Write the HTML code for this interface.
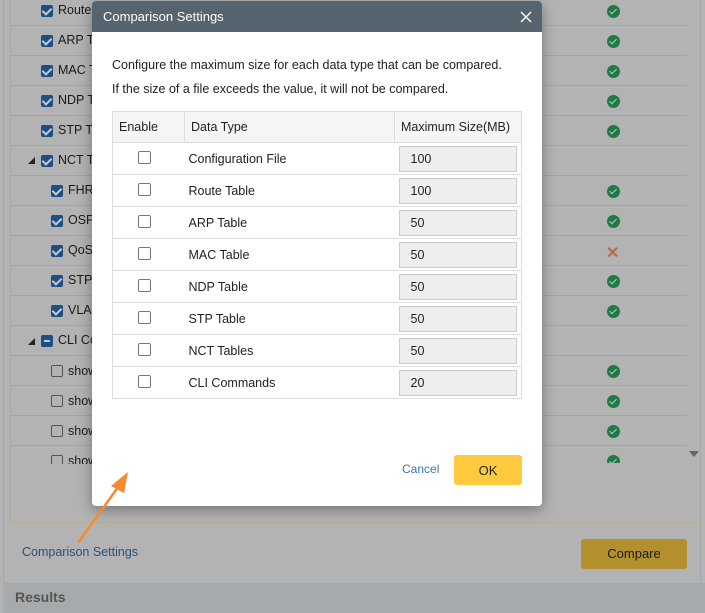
<!DOCTYPE html>
<html><head><style>
*{margin:0;padding:0;box-sizing:border-box}
body{width:705px;height:613px;overflow:hidden;background:#b3b3b3;font-family:"Liberation Sans",sans-serif;font-size:12px;color:#1a1a1a;position:relative}
.abs{position:absolute}
.row{position:absolute;left:10px;width:677px;height:30px;border-bottom:1px solid #a4a4a4}
.cb{position:absolute;width:12px;height:12px;border-radius:2px;background:#1c4f86}
.cb:after{content:"";position:absolute;left:3px;top:1px;width:4px;height:7px;border:solid #c8c8c8;border-width:0 2px 2px 0;transform:rotate(45deg)}
.ce{position:absolute;width:12px;height:12px;border-radius:2px;border:1px solid #555;background:#b3b3b3}
.lbl{position:absolute;font-size:12.5px;color:#1a1a1a}
.ok{position:absolute;left:607px;width:13px;height:13px;border-radius:50%;background:#1f7a45}
.ok:after{content:"";position:absolute;left:4px;top:2px;width:3px;height:6px;border:solid #b8c8bd;border-width:0 1.5px 1.5px 0;transform:rotate(45deg)}
.tri{position:absolute;width:0;height:0;border-left:7px solid transparent;border-bottom:7px solid #222}
#dlg{position:absolute;left:92px;top:1px;width:450px;height:505px;background:#fff;border-radius:4px;box-shadow:0 4px 14px rgba(0,0,0,.35);overflow:hidden}
#hd{height:31px;background:#56646f;color:#fff;font-size:13px;padding:8px 0 0 11px}
table{position:absolute;left:20px;top:110px;width:410px;border-collapse:collapse;font-size:12.5px;color:#222}
td,th{border:1px solid #ddd;height:32px;font-weight:normal;text-align:left}
th{background:#f5f5f5;height:31px;padding-left:6px}
td{border-left:none;border-right:none}
td:first-child{border-left:1px solid #ddd;padding-left:25px}td:last-child{border-right:1px solid #ddd}
.bx{display:block;width:13px;height:13px;border:1px solid #777;border-radius:2px;margin-top:-3px}
.inp{width:118px;height:26px;background:#eee;border:1px solid #ccc;padding:5px 0 0 11px;margin-left:4px}
</style></head><body>
<div class="abs" style="left:3px;top:0;width:1px;height:583px;background:#a8a8a8"></div>
<div class="abs" style="left:10px;top:0;width:1px;height:523px;background:#a8a8a8"></div>
<div class="abs" style="left:10px;top:522px;width:690px;height:1px;background:#b9ad8c"></div>
<div class="abs" style="left:700px;top:0;width:1px;height:583px;background:#a8a8a8"></div>
<div class="row" style="top:-4px"></div><div class="row" style="top:26px"></div><div class="row" style="top:56px"></div><div class="row" style="top:86px"></div><div class="row" style="top:116px"></div><div class="row" style="top:146px"></div><div class="row" style="top:176px"></div><div class="row" style="top:206px"></div><div class="row" style="top:236px"></div><div class="row" style="top:266px"></div><div class="row" style="top:296px"></div><div class="row" style="top:326px"></div><div class="row" style="top:356px"></div><div class="row" style="top:386px"></div><div class="row" style="top:416px"></div>
<div class="cb" style="left:41px;top:5px"></div><div class="lbl" style="left:58px;top:3px">Route</div>
<div class="cb" style="left:41px;top:35px"></div><div class="lbl" style="left:58px;top:33px">ARP Ta</div>
<div class="cb" style="left:41px;top:65px"></div><div class="lbl" style="left:58px;top:63px">MAC T</div>
<div class="cb" style="left:41px;top:95px"></div><div class="lbl" style="left:58px;top:93px">NDP T</div>
<div class="cb" style="left:41px;top:125px"></div><div class="lbl" style="left:58px;top:123px">STP Ta</div>
<div class="tri" style="left:28px;top:157px"></div>
<div class="cb" style="left:41px;top:155px"></div><div class="lbl" style="left:58px;top:153px">NCT Ta</div>
<div class="cb" style="left:51px;top:185px"></div><div class="lbl" style="left:68px;top:183px">FHRP</div>
<div class="cb" style="left:51px;top:215px"></div><div class="lbl" style="left:68px;top:213px">OSPF</div>
<div class="cb" style="left:51px;top:245px"></div><div class="lbl" style="left:68px;top:243px">QoS</div>
<div class="cb" style="left:51px;top:275px"></div><div class="lbl" style="left:68px;top:273px">STP</div>
<div class="cb" style="left:51px;top:305px"></div><div class="lbl" style="left:68px;top:303px">VLAN</div>
<div class="tri" style="left:28px;top:338px"></div>
<div class="abs" style="left:41px;top:335px;width:12px;height:12px;border-radius:2px;background:#1c4f86"><div style="margin:5px 3px;height:2px;background:#c8c8c8"></div></div><div class="lbl" style="left:58px;top:333px">CLI Co</div>
<div class="ce" style="left:51px;top:365px"></div><div class="lbl" style="left:68px;top:364px">show</div>
<div class="ce" style="left:51px;top:395px"></div><div class="lbl" style="left:68px;top:394px">show</div>
<div class="ce" style="left:51px;top:425px"></div><div class="lbl" style="left:68px;top:424px">show</div>
<div class="abs" style="left:0;top:455px;width:120px;height:9px;overflow:hidden"><div class="ce" style="left:51px;top:0"></div><div class="lbl" style="left:68px;top:-1px">show</div></div>
<div class="ok" style="top:5px"></div><div class="ok" style="top:35px"></div><div class="ok" style="top:65px"></div><div class="ok" style="top:95px"></div><div class="ok" style="top:125px"></div><div class="ok" style="top:185px"></div><div class="ok" style="top:215px"></div>
<div class="abs" style="left:606px;top:243px;color:#c0664a;font-size:16px;font-weight:bold">✕</div>
<div class="ok" style="top:275px"></div><div class="ok" style="top:305px"></div><div class="ok" style="top:365px"></div><div class="ok" style="top:395px"></div><div class="ok" style="top:425px"></div>
<div class="abs" style="left:0;top:455px;width:705px;height:8px;overflow:hidden"><div class="ok" style="top:0"></div></div>
<div class="abs" style="left:689px;top:451px;border-left:5px solid transparent;border-right:5px solid transparent;border-top:6px solid #666"></div>
<div class="abs" style="left:22px;top:545px;color:#2a5276;font-size:12.5px">Comparison Settings</div>
<div class="abs" style="left:581px;top:539px;width:106px;height:30px;background:#b38f2e;border-radius:3px;font-size:13px;text-align:center;padding-top:7px;color:#1a1a1a">Compare</div>
<div class="abs" style="left:3px;top:583px;width:702px;height:30px;background:#a7aaad;font-weight:bold;font-size:14px;color:#555;padding:6px 0 0 12px">Results</div>
<div id="dlg">
<div id="hd">Comparison Settings<svg style="position:absolute;right:10px;top:10px" width="12" height="12"><path d="M1 1L11 11M11 1L1 11" stroke="#fff" stroke-width="1.4"/></svg></div>
<div class="abs" style="left:20px;top:57px;color:#222;font-size:12.5px">Configure the maximum size for each data type that can be compared.</div>
<div class="abs" style="left:20px;top:81px;color:#222;font-size:12.5px">If the size of a file exceeds the value, it will not be compared.</div>
<table>
<tr><th style="width:72px">Enable</th><th style="width:210px">Data Type</th><th>Maximum Size(MB)</th></tr>
<tr><td><span class="bx"></span></td><td style="padding-left:4px">Configuration File</td><td><div class="inp">100</div></td></tr>
<tr><td><span class="bx"></span></td><td style="padding-left:4px">Route Table</td><td><div class="inp">100</div></td></tr>
<tr><td><span class="bx"></span></td><td style="padding-left:4px">ARP Table</td><td><div class="inp">50</div></td></tr>
<tr><td><span class="bx"></span></td><td style="padding-left:4px">MAC Table</td><td><div class="inp">50</div></td></tr>
<tr><td><span class="bx"></span></td><td style="padding-left:4px">NDP Table</td><td><div class="inp">50</div></td></tr>
<tr><td><span class="bx"></span></td><td style="padding-left:4px">STP Table</td><td><div class="inp">50</div></td></tr>
<tr><td><span class="bx"></span></td><td style="padding-left:4px">NCT Tables</td><td><div class="inp">50</div></td></tr>
<tr><td><span class="bx"></span></td><td style="padding-left:4px">CLI Commands</td><td><div class="inp">20</div></td></tr>
</table>
<div class="abs" style="left:310px;top:461px;color:#3a77b5">Cancel</div>
<div class="abs" style="left:362px;top:454px;width:68px;height:30px;background:#ffca3d;border-radius:3px;text-align:center;padding-top:8px;font-size:13px;color:#222">OK</div>
</div>
<svg class="abs" style="left:0;top:0;z-index:10" width="705" height="613"><line x1="78" y1="543" x2="121" y2="483" stroke="#f58a33" stroke-width="2.5"/><polygon points="128,472 111,486 124,493" fill="#f58a33"/></svg>
</body></html>
